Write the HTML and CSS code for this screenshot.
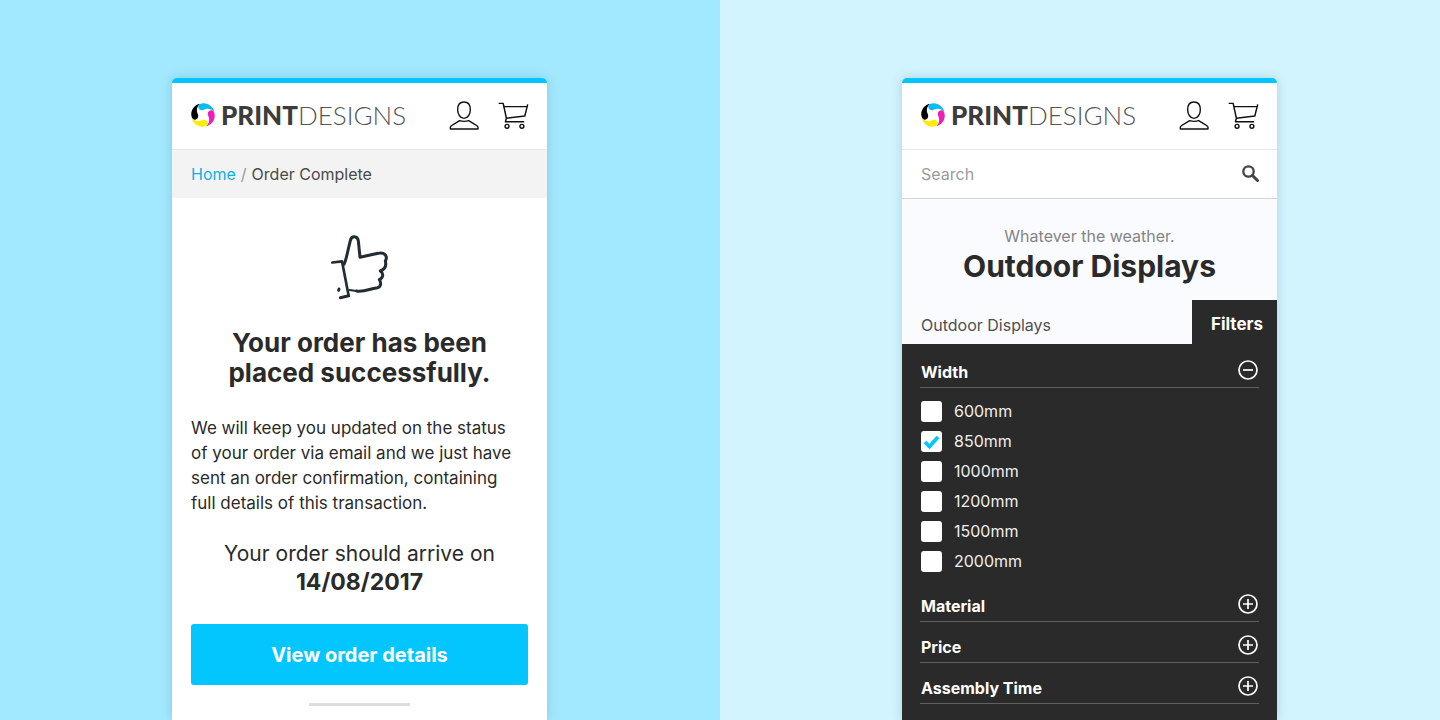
FILE: index.html
```html
<!DOCTYPE html>
<html lang="en">
<head>
<meta charset="utf-8">
<meta name="viewport" content="width=device-width, initial-scale=1">
<title>Print Designs</title>
<link rel="stylesheet" href="styles.css">
</head>
<body>
<svg class="sprite" aria-hidden="true">
  <symbol id="mark" viewBox="-36 -36 72 72">
    <path fill="#000" d="M-9 -34C-26 -31 -37 -14 -35 1C-34 10 -30 15 -24 14C-16 13 -13 6 -15 -1C-19 -10 -22 -22 -9 -34Z"/>
    <path fill="#0bbcf2" transform="rotate(90)" d="M-9 -34C-26 -31 -37 -14 -35 1C-34 10 -30 15 -24 14C-16 13 -13 6 -15 -1C-19 -10 -22 -22 -9 -34Z"/>
    <path fill="#ee1fb5" transform="rotate(180)" d="M-9 -34C-26 -31 -37 -14 -35 1C-34 10 -30 15 -24 14C-16 13 -13 6 -15 -1C-19 -10 -22 -22 -9 -34Z"/>
    <path fill="#ffed00" transform="rotate(270)" d="M-9 -34C-26 -31 -37 -14 -35 1C-34 10 -30 15 -24 14C-16 13 -13 6 -15 -1C-19 -10 -22 -22 -9 -34Z"/>
  </symbol>
  <symbol id="user" viewBox="146 88 93 93">
    <g fill="none" stroke="#111" stroke-width="4.200" stroke-linejoin="round">
      <path d="M191 94C204 94 210 104 210 117C210 131 202 143 191 143C180 143 172 131 172 117C172 104 178 94 191 94Z"/>
      <path d="M150 175V169C151 163 165 159 178 150C187 153 196 153 205 150C218 159 232 163 233 169V175Z"/>
    </g>
  </symbol>
  <symbol id="cart" viewBox="291 88 96 93">
    <g fill="none" stroke="#111" stroke-width="4.500" stroke-linejoin="round">
      <path d="M293 97H307L317 143L314 154H372M308 107H381M383 100L374 136L317 143"/>
      <circle cx="319" cy="168" r="6"/><circle cx="365" cy="168" r="6"/>
    </g>
  </symbol>
  <symbol id="plus" viewBox="0 0 20 20">
    <g fill="none" stroke="#fff" stroke-width="1.700"><circle cx="10" cy="10" r="9"/><path d="M5 10H15M10 5V15"/></g>
  </symbol>
  <symbol id="minus" viewBox="0 0 20 20">
    <g fill="none" stroke="#fff" stroke-width="1.700"><circle cx="10" cy="10" r="9"/><path d="M5 10H15"/></g>
  </symbol>
</svg>

<div class="stage">
  <section class="half half-order">
    <main class="card">
      <header class="header">
        <a class="logo" href="#"><svg class="mark" aria-hidden="true"><use href="#mark"/></svg><span><b>PRINT</b>DESIGNS</span></a>
        <nav class="actions">
          <a href="#" aria-label="Account"><svg class="nav-icon"><use href="#user"/></svg></a>
          <a href="#" aria-label="Basket"><svg class="nav-icon"><use href="#cart"/></svg></a>
        </nav>
      </header>
      <nav class="crumbs"><a href="#">Home</a><span class="slash">/</span><span>Order Complete</span></nav>
      <div class="order">
        <svg class="thumb" viewBox="60 40 180 204" fill="none" stroke="#222c33" stroke-width="9" stroke-linecap="round" stroke-linejoin="round" aria-hidden="true">
          <path d="M67 128.500L96 125L116 228" stroke-width="8"/>
          <path d="M91 234L116 228" stroke-width="9"/>
          <path d="M102 134C108 124 112 98 121 63C124 47 143 48 145 64L150 113L204 101C222 96 235 109 226 124C230 139 224 149 211 154C222 162 220 174 208 180C215 190 212 202 203 204C186 205 162 218 140 214"/>
          <path d="M140 214Q128 213 119 211" stroke-width="6"/>
          <path d="M87 208L86 212" stroke-width="9"/>
        </svg>
        <h1>Your order has been<br>placed successfully.</h1>
        <p class="copy">We will keep you updated on the status of your order via email and we just have sent an order confirmation, containing full details of this transaction.</p>
        <p class="arrival">Your order should arrive on<br><strong>14/08/2017</strong></p>
        <button class="cta" type="button">View order details</button>
        <hr>
      </div>
    </main>
  </section>

  <section class="half half-shop">
    <main class="card">
      <header class="header">
        <a class="logo" href="#"><svg class="mark" aria-hidden="true"><use href="#mark"/></svg><span><b>PRINT</b>DESIGNS</span></a>
        <nav class="actions">
          <a href="#" aria-label="Account"><svg class="nav-icon"><use href="#user"/></svg></a>
          <a href="#" aria-label="Basket"><svg class="nav-icon"><use href="#cart"/></svg></a>
        </nav>
      </header>
      <form class="search">
        <input type="text" placeholder="Search" aria-label="Search">
        <button type="button" aria-label="Submit search"><svg viewBox="0 0 17 17" fill="none" stroke="#444"><circle cx="6.500" cy="6.500" r="5.200" stroke-width="2.300"/><path d="M10.500 10.500L15.500 15.500" stroke-width="3" stroke-linecap="round"/></svg></button>
      </form>
      <div class="hero">
        <p>Whatever the weather.</p>
        <h2>Outdoor Displays</h2>
      </div>
      <div class="tabs"><span class="current">Outdoor Displays</span><button type="button">Filters</button></div>
      <div class="filters">
        <button class="group" type="button">Width<svg><use href="#minus"/></svg></button>
        <div class="options">
          <label><input type="checkbox">600mm</label>
          <label><input type="checkbox" checked>850mm</label>
          <label><input type="checkbox">1000mm</label>
          <label><input type="checkbox">1200mm</label>
          <label><input type="checkbox">1500mm</label>
          <label><input type="checkbox">2000mm</label>
        </div>
        <button class="group" type="button">Material<svg><use href="#plus"/></svg></button>
        <button class="group" type="button">Price<svg><use href="#plus"/></svg></button>
        <button class="group" type="button">Assembly Time<svg><use href="#plus"/></svg></button>
      </div>
    </main>
  </section>
</div>
</body>
</html>
```

FILE: styles.css
```css
* { box-sizing: border-box; }
body { margin: 0; font-family: Inter, "Liberation Sans", sans-serif; font-size: 16px; color: #2a2a2a; }
h1, h2, p { margin: 0; }
a { color: inherit; text-decoration: none; }
button { border: 0; font: inherit; cursor: pointer; }
svg { display: block; }
.sprite { position: absolute; width: 0; height: 0; }

.stage { display: grid; grid-template-columns: 1fr 1fr; min-height: 100vh; }
.half { display: flex; justify-content: center; padding-top: 78px; }
.half-order { background: #a2e9ff; padding-right: 1px; }
.half-shop { background: #d2f4ff; padding-left: 19px; }
.card {
  display: flex; flex-direction: column; width: 100%; max-width: 375px;
  background: #fff; border-top: 5px solid #04c6ff; border-radius: 5px 5px 0 0;
  box-shadow: 0 0 12px rgba(0, 60, 90, .18);
}

.header { display: flex; align-items: center; justify-content: space-between; height: 67px; padding: 0 18px 2px 19px; border-bottom: 1px solid #e8e8e8; }
.logo { display: flex; align-items: center; gap: 6px; font: 300 26px/32px Lato, sans-serif; color: #555; }
.logo b { font-weight: 900; color: #3c3c3c; }
.mark { width: 24px; height: 24px; }
.actions { display: flex; gap: 18px; }
.nav-icon { width: 31px; height: 31px; }

.crumbs { display: flex; gap: 5px; align-items: center; height: 48px; padding: 0 19px; background: #f3f3f3; color: #4a4a4a; }
.crumbs a { color: #12b0dc; }
.slash { color: #999; }

.order { display: flex; flex-direction: column; align-items: center; padding: 35px 19px 14px; text-align: center; }
.thumb { width: 60px; height: 68px; }
h1 { margin-top: 27px; font-size: 26px; line-height: 30px; }
.copy { margin-top: 28px; padding-right: 6px; font-size: 17px; line-height: 25px; text-align: left; }
.arrival { margin-top: 24px; font-size: 21px; line-height: 28px; }
.arrival strong { font-size: 23px; }
.cta { width: 100%; height: 61px; margin-top: 27px; border-radius: 3px; background: #04c6ff; color: #fff; font-size: 20px; font-weight: 700; }
hr { width: 101px; margin: 18px 0 0; border: 0; border-top: 3px solid #ddd; }

.search { display: flex; align-items: center; height: 49px; padding: 0 18px 2px 19px; border-bottom: 1px solid #d3d5d8; }
.search input { flex: 1; min-width: 0; padding: 2px 0 0; border: 0; outline: 0; font: inherit; color: #444; background: none; }
.search input::placeholder { color: #9b9b9b; opacity: 1; }
.search button { padding: 0; background: none; }
.search svg { width: 17px; height: 17px; }
.hero { padding: 26px 19px 15px; background: #fafbfe; text-align: center; }
.hero p { font-size: 16px; line-height: 22px; color: #858585; }
.hero h2 { font-size: 30px; line-height: 38px; }
.tabs { display: flex; justify-content: space-between; align-items: stretch; height: 44px; background: #fafbfe; }
.current { padding: 14px 19px 0; line-height: 22px; color: #505050; }
.tabs button { padding: 4px 14px 0 19px; background: #2a2a2a; color: #fff; font-size: 17px; font-weight: 700; }

.filters { flex: 1; padding: 3px 18px 15px; background: #2a2a2a; color: #fff; }
.group { display: flex; align-items: center; justify-content: space-between; width: 100%; height: 41px; padding: 9px 1px 0; border-bottom: 1px solid #606060; background: none; color: #fff; font-weight: 700; }
.group svg { width: 20px; height: 20px; margin-bottom: 3px; }
.options { display: flex; flex-direction: column; gap: 9px; padding: 13px 1px 9px; }
.options label { display: flex; align-items: center; gap: 12px; line-height: 21px; color: #eee; }
.options input { appearance: none; width: 21px; height: 21px; margin: 0; border-radius: 3px; background: #fff; }
.options input:checked { background: #fff url("data:image/svg+xml,%3Csvg xmlns='http://www.w3.org/2000/svg' viewBox='0 0 21 21'%3E%3Cpath d='M4 11l4.500 4.500L17 6' fill='none' stroke='%2304c6ff' stroke-width='3.800'/%3E%3C/svg%3E"); }
```
